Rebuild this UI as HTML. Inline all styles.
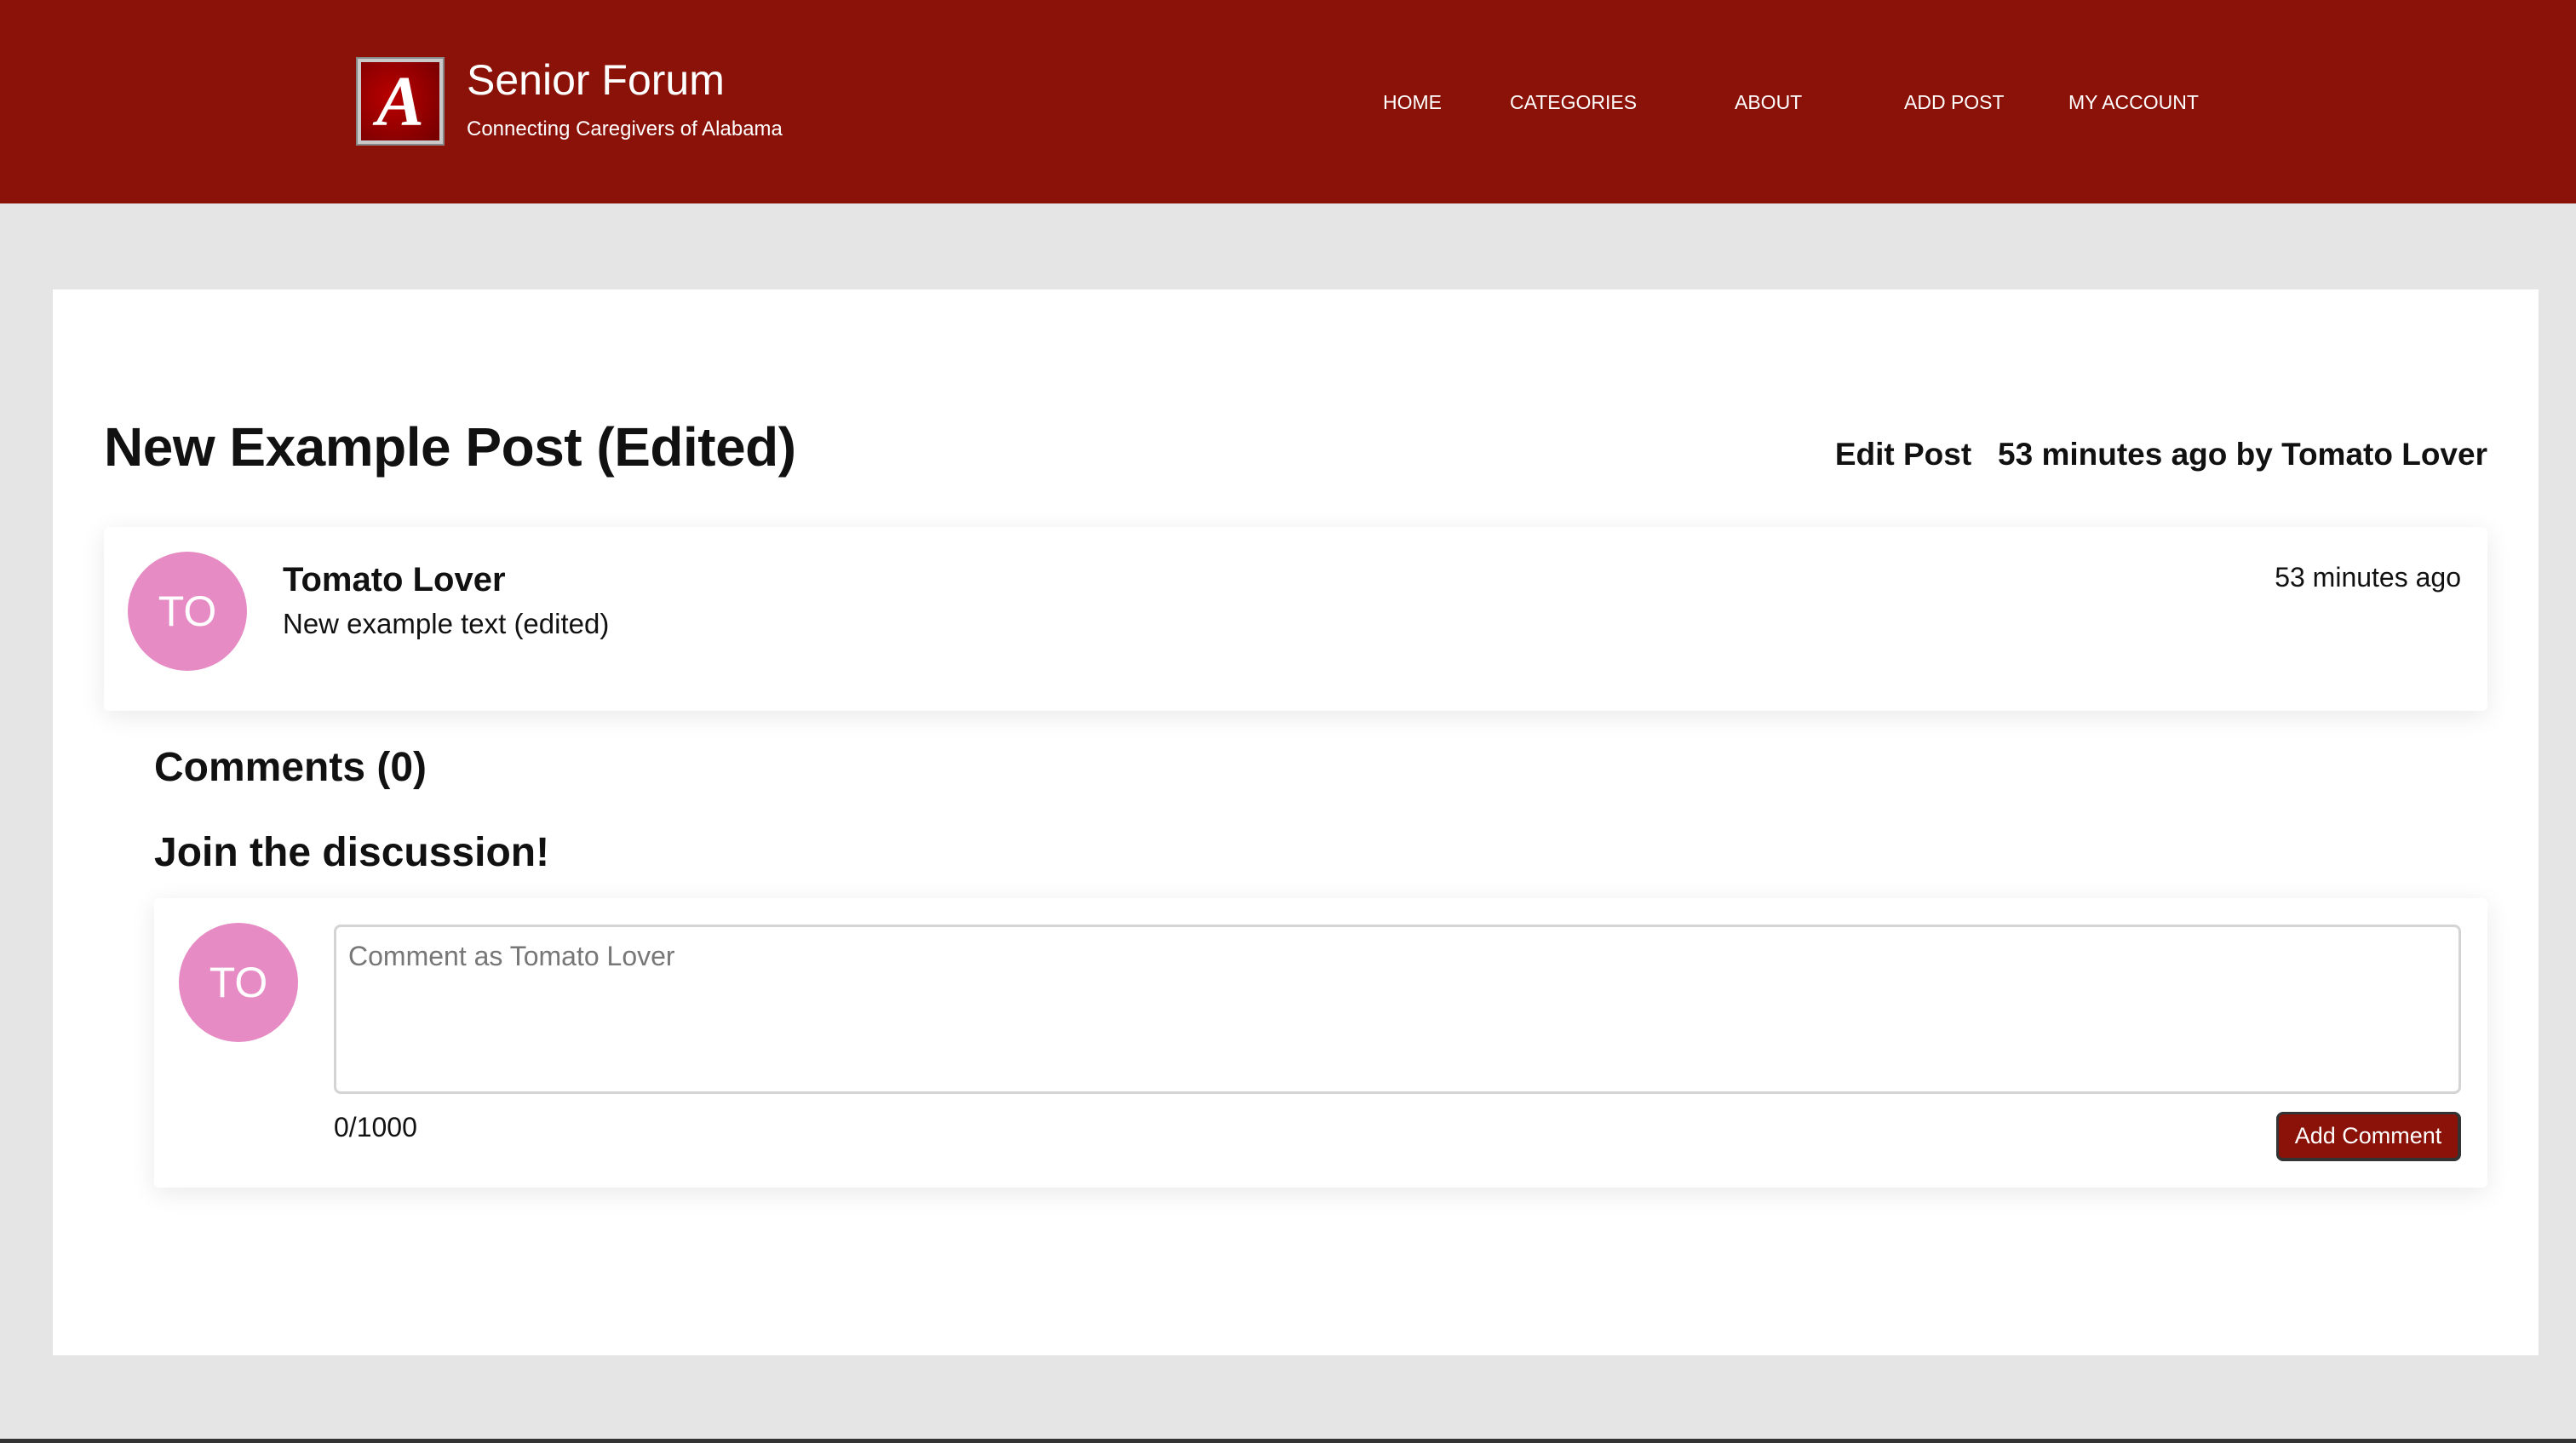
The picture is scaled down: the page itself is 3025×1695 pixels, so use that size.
<!DOCTYPE html>
<html><head><meta charset="utf-8"><style>
*{margin:0;padding:0;box-sizing:border-box}
html,body{width:3025px;height:1695px;overflow:hidden;background:#e5e5e5;font-family:"Liberation Sans",sans-serif;color:#111}
.hdr{position:absolute;left:0;top:0;width:3025px;height:239px;background:#8b1208}
.logo{position:absolute;left:420px;top:69px;width:100px;height:100px;border:4px solid #c9c9c9;background:radial-gradient(circle at 40% 45%,#b00 0%,#7a0000 90%);outline:2px solid #888}
.logo span{position:absolute;left:0;right:0;top:2px;text-align:center;color:#fff;font-family:"Liberation Serif",serif;font-style:italic;font-weight:bold;font-size:84px;line-height:90px}
.t1{position:absolute;left:548px;top:64px;color:#fff;font-size:50px;line-height:60px}
.t2{position:absolute;left:548px;top:137px;color:#fff;font-size:24px;line-height:30px}
.nav{position:absolute;top:106px;color:#fff;font-size:23px;line-height:28px}
.card{position:absolute;left:62px;top:340px;width:2919px;height:1252px;background:#fff}
.abs{position:absolute;white-space:nowrap}
.box{position:absolute;background:#fff;border-radius:6px;box-shadow:0 6px 30px rgba(0,0,0,.09)}
.av{position:absolute;width:140px;height:140px;border-radius:50%;background:#e68bc4;color:#fff;font-size:50px;line-height:140px;text-align:center}
.bottom{position:absolute;left:0;top:1690px;width:3025px;height:5px;background:#333}
</style></head><body>
<div class="hdr">
<div class="logo"><span>A</span></div>
<div class="t1">Senior Forum</div>
<div class="t2">Connecting Caregivers of Alabama</div>
<div class="nav" style="left:1624px">HOME</div>
<div class="nav" style="left:1773px">CATEGORIES</div>
<div class="nav" style="left:2037px">ABOUT</div>
<div class="nav" style="left:2236px">ADD POST</div>
<div class="nav" style="left:2429px">MY ACCOUNT</div>
</div>
<div class="card"></div>
<div class="abs" style="left:122px;top:486px;font-size:64px;line-height:78px;font-weight:bold;letter-spacing:-0.5px">New Example Post (Edited)</div>
<div class="abs" style="right:104px;top:512px;font-size:37px;line-height:44px;font-weight:bold">Edit Post&nbsp;&nbsp;&nbsp;53 minutes ago by Tomato Lover</div>
<div class="box" style="left:122px;top:619px;width:2799px;height:216px"></div>
<div class="av" style="left:150px;top:648px">TO</div>
<div class="abs" style="left:332px;top:657px;font-size:40px;line-height:48px;font-weight:bold">Tomato Lover</div>
<div class="abs" style="left:332px;top:713px;font-size:33px;line-height:40px">New example text (edited)</div>
<div class="abs" style="right:135px;top:658px;font-size:32px;line-height:40px">53 minutes ago</div>
<div class="abs" style="left:181px;top:872px;font-size:48px;line-height:60px;font-weight:bold">Comments (0)</div>
<div class="abs" style="left:181px;top:972px;font-size:48px;line-height:60px;font-weight:bold">Join the discussion!</div>
<div class="box" style="left:181px;top:1055px;width:2740px;height:340px"></div>
<div class="av" style="left:210px;top:1084px">TO</div>
<div class="abs" style="left:392px;top:1086px;width:2498px;height:199px;border:3px solid #d4d4d4;border-radius:8px;background:#fff"></div>
<div class="abs" style="left:409px;top:1103px;font-size:32px;line-height:40px;color:#777">Comment as Tomato Lover</div>
<div class="abs" style="left:392px;top:1304px;font-size:32px;line-height:40px">0/1000</div>
<div class="abs" style="left:2673px;top:1306px;width:217px;height:58px;background:#8b1208;border:3px solid #333;border-right-width:4px;border-bottom-width:4px;border-radius:8px;color:#fff;font-size:27px;line-height:50px;text-align:center">Add Comment</div>
<div class="bottom"></div>
</body></html>
